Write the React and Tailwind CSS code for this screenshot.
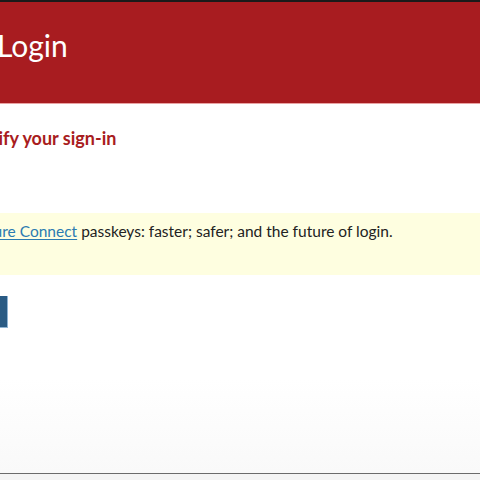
import React from 'react';

const App = () => {
  return (
    <div className="w-[480px] h-[480px] overflow-hidden bg-[#f4f4f4] font-['Lato',sans-serif]">
      {/* Window: dark top rule, grey bottom rule */}
      <div className="h-[474px] flex flex-col bg-gradient-to-b from-white from-80% to-[#f9f9f9] border-t-[2px] border-t-[#1a1a1a] border-b border-b-[#6b6b6b] overflow-hidden">
        {/* Header band */}
        <header className="h-[102px] shrink-0 bg-[#a81c20] border-b-[1px] border-b-[#e9a3a3] flex items-start">
          <h1 className="-ml-[3px] mt-[23px] text-[30px] leading-[40px] text-white whitespace-nowrap">Login</h1>
        </header>

        {/* Body */}
        <main className="flex flex-col">
          <h2 className="-ml-[29px] mt-[22px] text-[18px] leading-[24px] font-bold text-[#a81c20] whitespace-nowrap">
            Verify your sign-in
          </h2>

          <div className="mt-[63px] h-[62px] bg-[#fefee0] pt-[7px]">
            <p className="-ml-[55px] text-[15.5px] leading-[22px] text-[#222] whitespace-nowrap">
              <a href="#" className="text-[#2b7bb1] underline underline-offset-2">Try Secure Connect</a> passkeys: faster; safer; and the future of login.
            </p>
          </div>

          <div className="mt-[21px] flex">
            <button className="-ml-[72px] w-[80px] h-[32px] bg-[#2a5b84] border-r border-b border-[#8fb4d4] text-white text-[15px] whitespace-nowrap overflow-hidden">
              <span className="invisible">Continue</span>
            </button>
          </div>
        </main>
      </div>
    </div>
  );
};

export default App;
